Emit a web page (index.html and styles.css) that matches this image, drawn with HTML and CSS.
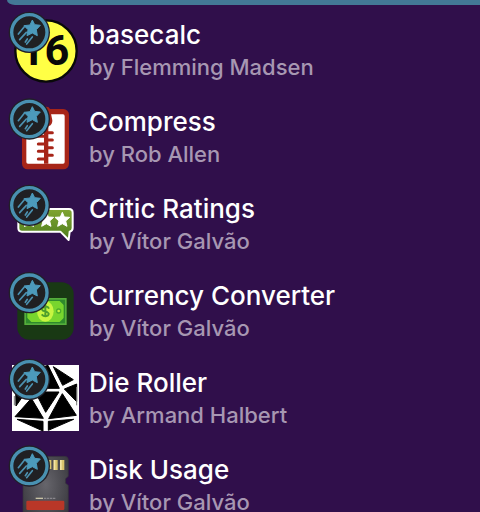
FILE: index.html
```html
<!DOCTYPE html>
<html lang="en">
<head>
<meta charset="utf-8">
<title>Workflows</title>
<link rel="stylesheet" href="styles.css">
</head>
<body>
<svg class="defs" aria-hidden="true">
  <symbol id="badge" viewBox="-64 -64 128 128">
    <circle r="62" fill="#211f27"/>
    <circle r="53" fill="#202023" stroke="#4991b1" stroke-width="10"/>
    <path d="M9-37 16-23 33-21 21-8 24 10 9 2-7 10-4-8-16-20 2-22Z" fill="#4c9abb" stroke="#4c9abb" stroke-width="3" stroke-linejoin="round"/>
    <path d="M-15-17-33 5M-9 0-29 22M-12 29-6 20M9 14-8 35" fill="none" stroke="#4c91b0" stroke-width="5" stroke-linecap="round"/>
  </symbol>
</svg>
<div class="selection"></div>
<main>
<ul class="list">
  <li class="row">
    <svg class="icon" viewBox="0 15 267 261" aria-hidden="true">
      <circle cx="138" cy="153" r="92" fill="#ffff45" stroke="#090909" stroke-width="7"/>
      <text class="digits" x="59" y="196">16</text>
      <use href="#badge" x="24" y="33" width="128" height="128"/>
    </svg>
    <div class="text"><h2>basecalc</h2><p>by Flemming Madsen</p></div>
  </li>
  <li class="row">
    <svg class="icon" viewBox="0 6 267 261" aria-hidden="true">
      <rect x="66" y="57" width="141" height="181" rx="17" fill="#a72518"/>
      <rect x="79" y="73" width="115" height="148" rx="5" fill="#fff"/>
      <path d="M132 221V52q13-6 18 5l7 34q1 14-12 18v112Z" fill="#a72518"/>
      <path d="M139 128h18M139 150h18M139 173h18M139 196h18M115 139h20M115 162h20M115 184h20M115 207h20" stroke="#a72518" stroke-width="9" stroke-linecap="round"/>
      <use href="#badge" x="24" y="23" width="128" height="128"/>
    </svg>
    <div class="text"><h2>Compress</h2><p>by Rob Allen</p></div>
  </li>
  <li class="row">
    <svg class="icon" viewBox="0 3 267 261" aria-hidden="true">
      <defs><linearGradient id="leaf" x1="0" y1="0" x2="0" y2="1"><stop offset="0" stop-color="#80a532"/><stop offset="1" stop-color="#4e7d1d"/></linearGradient></defs>
      <path d="M66 93H207q11 0 11 11v46q0 9-9 11l-3 25-25-25H66q-11 0-11-11v-46q0-11 11-11Z" fill="url(#leaf)" stroke="#fff" stroke-width="6" stroke-linejoin="round"/>
      <path id="star" d="m187 103 6 14 16 1-12 11 4 16-14-8-14 8 4-16-12-11 16-1Z" fill="#fff" stroke="#fff" stroke-width="3" stroke-linejoin="round"/>
      <use href="#star" x="-48"/>
      <path d="M72 147v-9l15-7 15 7v9l-15-5Z" fill="#fff"/>
      <use href="#badge" x="24" y="18" width="128" height="128"/>
    </svg>
    <div class="text"><h2>Critic Ratings</h2><p>by Vítor Galvão</p></div>
  </li>
  <li class="row">
    <svg class="icon" viewBox="0 3 267 261" aria-hidden="true">
      <rect x="52" y="52" width="169" height="172" rx="36" fill="#193914"/>
      <rect x="73" y="99" width="127" height="81" fill="#55ae3c"/>
      <rect x="78" y="104" width="117" height="71" fill="#2f8a2c"/>
      <rect x="82" y="108" width="109" height="63" fill="#78d52e"/>
      <path d="M81 107h14l-14 14ZM192 107h-14l14 14ZM81 172h14l-14-14ZM192 172h-14l14-14Z" fill="#2f8a2c"/>
      <ellipse cx="136" cy="139" rx="25" ry="31" fill="#c8f541"/>
      <path d="M147 131q-4-9-15-5-10 5-3 11l12 4q9 5 2 11-10 5-18-4M136 120v37" fill="none" stroke="#4f9f2c" stroke-width="6"/>
      <circle cx="176" cy="138" r="6" fill="#c8f541" stroke="#4dac2b" stroke-width="4"/>
      <circle cx="95" cy="138" r="6" fill="#c8f541" stroke="#4dac2b" stroke-width="4"/>
      <use href="#badge" x="24" y="19" width="128" height="128"/>
    </svg>
    <div class="text"><h2>Currency Converter</h2><p>by Vítor Galvão</p></div>
  </li>
  <li class="row">
    <svg class="icon" viewBox="0 3 267 261" aria-hidden="true">
      <path d="M36 39H237V237H36Z" fill="#fff"/>
      <path d="M160 44 220 83 188 100ZM230 96v53L193 111ZM144 40 178 109H110V50ZM106 120H177L137 181ZM187 125 229 190 146 200ZM94 139 130 199 45 194ZM47 110H84L48 162ZM51 202 129 208V237ZM145 208 221 202 145 235Z" fill="#000" stroke="#000" stroke-width="3"/>
      <path d="M43 132v28M230 105v55" stroke="#777" stroke-width="3"/>
      <use href="#badge" x="24" y="18" width="128" height="128"/>
    </svg>
    <div class="text"><h2>Die Roller</h2><p>by Armand Halbert</p></div>
  </li>
  <li class="row">
    <svg class="icon" viewBox="0 24 267 261" aria-hidden="true">
      <defs><radialGradient id="card" cx=".5" cy=".4" r=".6"><stop offset="0" stop-color="#66656b"/><stop offset="1" stop-color="#3c3b41"/></radialGradient></defs>
      <path d="M84 73H194q11 0 11 11v49l-8 7v14l8 6v125H69V88q0-15 15-15Z" fill="url(#card)" stroke="#34313b" stroke-width="2"/>
      <path d="M141 84h13v27h-13ZM161 84h12v30h-12ZM180 84h13v30h-13Z" fill="#d9c46d"/>
      <path d="M143 84h4v27h-4ZM161 84h5v30h-5ZM180 84h5v30h-5Z" fill="#f2e4a5"/>
      <path d="M107 199h22" stroke="#c9c3a5" stroke-width="4"/>
      <path d="M132 199h36" stroke="#89868b" stroke-width="4" stroke-dasharray="7 2"/>
      <rect x="79" y="206" width="114" height="28" rx="4" fill="#b93728"/>
      <use href="#badge" x="24" y="38" width="128" height="128"/>
    </svg>
    <div class="text"><h2>Disk Usage</h2><p>by Vítor Galvão</p></div>
  </li>
</ul>
</main>
</body>
</html>
```

FILE: styles.css
```css
body {
  margin: 0;
  height: 100vh;
  overflow: hidden;
  background: #300f4b;
  font-family: Inter, "Liberation Sans", sans-serif;
}

.defs {
  position: absolute;
  width: 0;
  height: 0;
}

.selection {
  height: 5px;
  margin-left: 7px;
  border-bottom-left-radius: 8px 5px;
  background: #437896;
}

.list {
  margin: 0;
  padding: 0;
  list-style: none;
}

.row {
  display: flex;
}

.icon {
  flex: none;
  width: 89px;
  height: 87px;
}

.digits {
  font: bold 130px Roboto, "Liberation Sans", sans-serif;
  fill: #090909;
}

.text {
  padding-top: 13px;
  white-space: nowrap;
}

h2,
p {
  margin: 0;
}

h2 {
  font-size: 26px;
  font-weight: 500;
  line-height: 34px;
  color: #fff;
}

p {
  font-size: 22px;
  font-weight: 500;
  line-height: 30px;
  color: #a797b2;
}
```
